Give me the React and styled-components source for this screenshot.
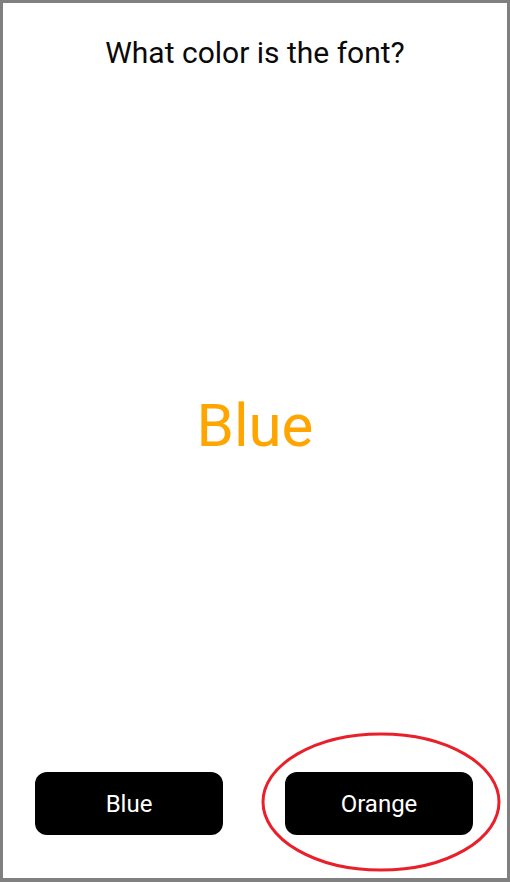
import React from 'react';
import styled, { createGlobalStyle } from 'styled-components';

const GlobalStyle = createGlobalStyle`
    html, body {
        margin: 0;
        padding: 0;
        background: #ffffff;
    }
    * {
        box-sizing: border-box;
    }
`;

const options = ['Blue', 'Orange'];

const App = () => {
    return (
        <>
            <GlobalStyle />
            <Frame>
                <Question>What color is the font?</Question>
                <WordArea>
                    <Word color="#FFA500">Blue</Word>
                </WordArea>
                <Answers>
                    {options.map((label) => (
                        <AnswerButton key={label}>{label}</AnswerButton>
                    ))}
                </Answers>
                <Highlight viewBox="0 0 240 140" width="240" height="140">
                    <ellipse cx="120" cy="70" rx="118" ry="68" fill="none" stroke="#E8202A" strokeWidth="3" />
                </Highlight>
            </Frame>
        </>
    );
};
export default App;

const Frame = styled.div`
    position: relative;
    width: 510px;
    height: 882px;
    border: 3px solid #808080;
    border-bottom-width: 4px;
    background: #ffffff;
    display: flex;
    flex-direction: column;
    font-family: 'Roboto', 'Liberation Sans', sans-serif;
    overflow: hidden;
`;

const Question = styled.h1`
    margin: 0;
    padding-top: 32px;
    text-align: center;
    font-size: 30px;
    font-weight: 400;
    line-height: 36px;
    color: #0a0a0a;
`;

const WordArea = styled.div`
    flex: 1;
    display: flex;
    align-items: center;
    justify-content: center;
    padding-top: 9px;
`;

const Word = styled.div`
    font-size: 60px;
    line-height: 60px;
    color: ${(p) => p.color};
`;

const Answers = styled.div`
    display: flex;
    justify-content: space-between;
    padding: 0 34px 43px 32px;
`;

const AnswerButton = styled.button`
    width: 188px;
    height: 63px;
    border: none;
    border-radius: 12px;
    background: #000000;
    color: #ffffff;
    font-family: 'Roboto', 'Liberation Sans', sans-serif;
    font-size: 24px;
    cursor: pointer;
`;

const Highlight = styled.svg`
    position: absolute;
    left: 258px;
    top: 729px;
    pointer-events: none;
`;
